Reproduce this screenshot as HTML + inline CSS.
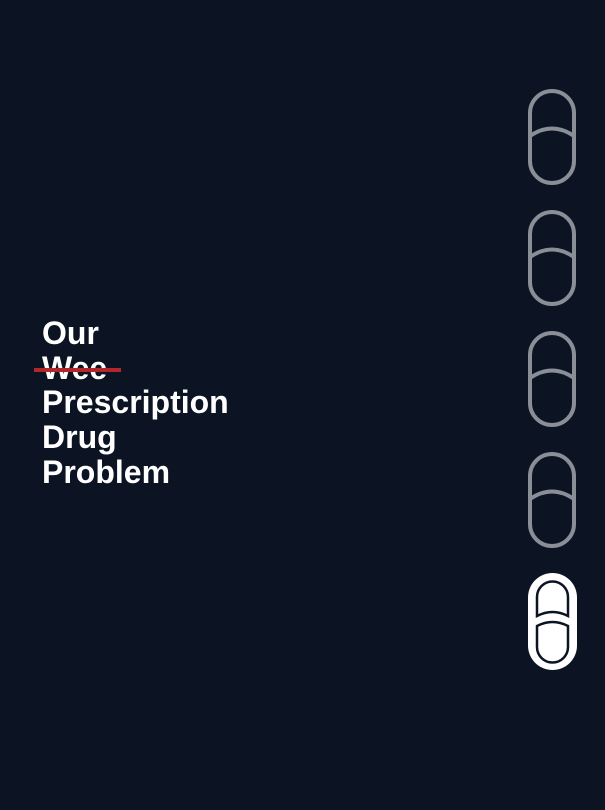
<!DOCTYPE html>
<html><head><style>
html,body{margin:0;padding:0;}
body{width:605px;height:810px;background:#0c1423;position:relative;overflow:hidden;font-family:"Liberation Sans",sans-serif;}
.t{position:absolute;left:42px;top:316px;color:#fff;font-weight:bold;font-size:32px;line-height:34.7px;letter-spacing:0px;}
.strike{position:absolute;left:34px;top:368px;width:87px;height:4px;background:#b3262b;}
svg{position:absolute;left:0;top:0;}
</style></head><body>
<div class="t">Our<br>Wee<br>Prescription<br>Drug<br>Problem</div>
<div class="strike"></div>
<svg width="605" height="810">
<g fill="none" stroke="#8a8e96" stroke-width="4">
<g transform="translate(0,0)"><rect x="530" y="91" width="44" height="92" rx="22"/><path d="M530 136 Q552 121 574 136"/></g>
<g transform="translate(0,121)"><rect x="530" y="91" width="44" height="92" rx="22"/><path d="M530 136 Q552 121 574 136"/></g>
<g transform="translate(0,242)"><rect x="530" y="91" width="44" height="92" rx="22"/><path d="M530 136 Q552 121 574 136"/></g>
<g transform="translate(0,363)"><rect x="530" y="91" width="44" height="92" rx="22"/><path d="M530 136 Q552 121 574 136"/></g>
</g>
<rect x="528" y="573" width="49" height="97" rx="24.5" fill="#fff"/>
<g fill="none" stroke="#0c1423" stroke-width="2.5">
<path d="M537 616 L537 597 A15 15 0 0 1 568 597 L568 616 Q552.5 608 537 616 Z"/>
<path d="M537 626 Q552.5 618 568 626 L568 647 A15 15 0 0 1 537 647 Z"/>
</g>
</svg>
</body></html>
